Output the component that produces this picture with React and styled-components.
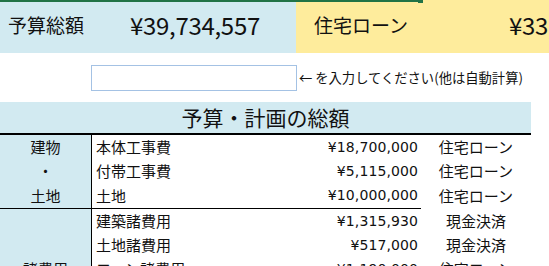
import React from 'react'
import styled, { createGlobalStyle } from 'styled-components'

const GlobalStyle = createGlobalStyle`
    body {
        margin: 0;
        font-family: "Noto Sans CJK JP", "Noto Sans", sans-serif;
        color: #111;
        background: #fff;
    }
`

const Sheet = styled.div`
    position: relative;
    width: 549px;
    height: 266px;
    overflow: hidden;
`

const SelectionEdge = styled.div`
    position: absolute;
    left: 0;
    top: 0;
    width: 418px;
    height: 2px;
    background: #217346;

    &::after {
        content: '';
        position: absolute;
        left: 418px;
        top: 0;
        width: 5px;
        height: 3px;
        background: #217346;
    }
`

const SummaryBand = styled.div`
    display: flex;
    height: 53px;
`

const SummaryCell = styled.div`
    box-sizing: border-box;
    display: flex;
    align-items: center;
    padding: 0 0 4px ${p => p.$pad}px;
    width: ${p => (p.$width ? `${p.$width}px` : 'auto')};
    flex: ${p => (p.$width ? 'none' : '1')};
    background: ${p => p.$bg};
    white-space: nowrap;
    overflow: hidden;
`

const SummaryLabel = styled.span`
    width: ${p => p.$width}px;
    flex: none;
    font-size: 19px;
`

const SummaryAmount = styled.span`
    font-size: 24px;
    letter-spacing: -0.3px;
`

const InputRow = styled.div`
    display: flex;
    align-items: center;
    height: 49px;
    padding-left: 91px;
`

const EntryBox = styled.input`
    box-sizing: border-box;
    width: 206px;
    height: 26px;
    border: 1px solid #a4c2e4;
    outline: none;
    margin: 0;
    padding: 0 4px;
`

const Hint = styled.span`
    margin-left: 2px;
    font-size: 13.3px;
    white-space: nowrap;
`

const TitleBar = styled.div`
    width: 531px;
    height: 33px;
    display: flex;
    align-items: center;
    justify-content: center;
    padding-bottom: 2px;
    box-sizing: border-box;
    background: #d2eaf1;
    border-bottom: 2px solid #000;
    font-size: 21px;
`

const Section = styled.div`
    display: flex;
    width: 531px;
`

const Block = styled.div`
    display: flex;
    width: 421px;
    border-bottom: ${p => (p.$ruled ? '1px solid #000' : 'none')};
`

const SideColumn = styled.div`
    width: 91px;
    flex: none;
    background: #d2eaf1;
    border-right: 1px solid #000;
`

const Lines = styled.div`
    flex: 1;
`

const Line = styled.div`
    display: flex;
    align-items: center;
    height: ${p => p.$h}px;
    padding-bottom: 1px;
    box-sizing: border-box;
    font-size: 15px;
    white-space: nowrap;
`

const SideText = styled(Line)`
    justify-content: center;
`

const ItemName = styled.span`
    flex: 1;
    padding-left: 4px;
`

const Amount = styled.span`
    padding-right: 3px;
    font-family: "DejaVu Sans", Verdana, sans-serif;
    font-size: 14px;
    letter-spacing: 0.1px;
`

const PayColumn = styled.div`
    width: 110px;
`

const PayText = styled(Line)`
    justify-content: center;
`

const sections = [
    {
        ruled: true,
        rows: [
            { side: '建物', item: '本体工事費', amount: 18700000, pay: '住宅ローン', h: 24 },
            { side: '・', item: '付帯工事費', amount: 5115000, pay: '住宅ローン', h: 24 },
            { side: '土地', item: '土地', amount: 10000000, pay: '住宅ローン', h: 25 }
        ]
    },
    {
        ruled: false,
        rows: [
            { side: '', item: '建築諸費用', amount: 1315930, pay: '現金決済', h: 24 },
            { side: '', item: '土地諸費用', amount: 517000, pay: '現金決済', h: 24 },
            { side: '諸費用', item: 'ローン諸費用', amount: 1190000, pay: '住宅ローン', h: 24 }
        ]
    }
]

const yen = n => '¥' + n.toLocaleString('en-US')

export default function App () {
    return (
        <Sheet>
            <GlobalStyle />
            <SelectionEdge />
            <SummaryBand>
                <SummaryCell $width={296} $pad={8} $bg="#d2eaf1">
                    <SummaryLabel $width={122}>予算総額</SummaryLabel>
                    <SummaryAmount>{yen(39734557)}</SummaryAmount>
                </SummaryCell>
                <SummaryCell $pad={18} $bg="#feec9c">
                    <SummaryLabel $width={195}>住宅ローン</SummaryLabel>
                    <SummaryAmount>{yen(33000000)}</SummaryAmount>
                </SummaryCell>
            </SummaryBand>
            <InputRow>
                <EntryBox type="text" />
                <Hint>← を入力してください(他は自動計算)</Hint>
            </InputRow>
            <TitleBar>予算・計画の総額</TitleBar>
            {sections.map((section, i) => (
                <Section key={i}>
                    <Block $ruled={section.ruled}>
                        <SideColumn>
                            {section.rows.map((row, j) => (
                                <SideText key={j} $h={row.h}>{row.side}</SideText>
                            ))}
                        </SideColumn>
                        <Lines>
                            {section.rows.map((row, j) => (
                                <Line key={j} $h={row.h}>
                                    <ItemName>{row.item}</ItemName>
                                    <Amount>{yen(row.amount)}</Amount>
                                </Line>
                            ))}
                        </Lines>
                    </Block>
                    <PayColumn>
                        {section.rows.map((row, j) => (
                            <PayText key={j} $h={row.h}>{row.pay}</PayText>
                        ))}
                    </PayColumn>
                </Section>
            ))}
        </Sheet>
    )
}
